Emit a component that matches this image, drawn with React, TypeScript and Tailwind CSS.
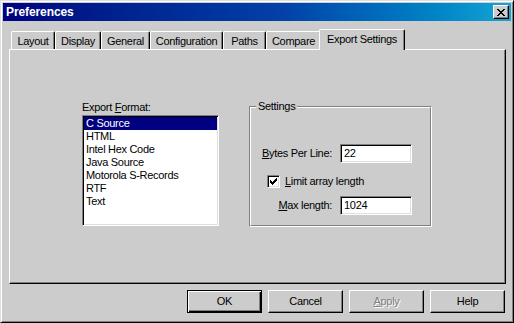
import React from 'react';

const raised =
  'border border-t-white border-l-white border-r-black border-b-black shadow-[inset_-1px_-1px_0_#808080]';
const sunken =
  'border border-t-[#808080] border-l-[#808080] border-r-white border-b-white shadow-[inset_1px_1px_0_#000,inset_-1px_-1px_0_#dfdfdf]';

const tabs = [
  { label: 'Layout', w: 'w-[44px]' },
  { label: 'Display', w: 'w-[46px]' },
  { label: 'General', w: 'w-[49px]' },
  { label: 'Configuration', w: 'w-[73px]' },
  { label: 'Paths', w: 'w-[43px]' },
  { label: 'Compare', w: 'w-[55px]' },
];

const formats = ['C Source', 'HTML', 'Intel Hex Code', 'Java Source', 'Motorola S-Records', 'RTF', 'Text'];

const CloseGlyph = () => (
  <svg width="8" height="7" viewBox="0 0 8 7" shapeRendering="crispEdges">
    <path
      d="M0 0h2v1H0zM6 0h2v1H6zM1 1h2v1H1zM5 1h2v1H5zM2 2h4v1H2zM3 3h2v1H3zM2 4h4v1H2zM1 5h2v1H1zM5 5h2v1H5zM0 6h2v1H0zM6 6h2v1H6z"
      fill="#000"
    />
  </svg>
);

const CheckGlyph = () => (
  <svg width="7" height="7" viewBox="0 0 7 7" shapeRendering="crispEdges">
    <path d="M6 0h1v1H6zM5 1h2v1H5zM0 2h1v1H0zM4 2h3v1H4zM0 3h2v1H0zM3 3h3v1H3zM0 4h5v1H0zM1 5h3v1H1zM2 6h1v1H2z" fill="#000" />
  </svg>
);

const Button = ({ children, isDefault }: { children: React.ReactNode; isDefault?: boolean }) => (
  <div
    className={`w-[75px] h-[23px] flex items-center justify-center ${
      isDefault
        ? 'border border-black shadow-[inset_1px_1px_0_#fff,inset_-1px_-1px_0_#000,inset_-2px_-2px_0_#808080]'
        : raised
    }`}
  >
    {children}
  </div>
);

export default function App() {
  return (
    <div className="w-[514px] h-[323px] bg-[#cccccc] font-['Liberation_Sans',Arial,sans-serif] text-[11px] leading-[13px] tracking-[-0.3px] text-black select-none">
      <div className="w-full h-full p-[2px] border border-t-[#dfdfdf] border-l-[#dfdfdf] border-r-black border-b-black shadow-[inset_1px_1px_0_#fff,inset_-1px_-1px_0_#808080] flex flex-col">
        {/* title bar */}
        <div className="h-[18px] flex items-center justify-between pl-[3px] pr-[2px] bg-linear-to-r from-[#000080] via-[#0440a8] via-55% to-[#16a4d4]">
          <span className="text-white font-bold text-[12px] tracking-[-0.1px]">Preferences</span>
          <div className={`w-[16px] h-[14px] bg-[#cccccc] flex items-center justify-center ${raised}`}>
            <CloseGlyph />
          </div>
        </div>

        {/* tab strip */}
        <div className="mt-[8px] h-[20px] pl-[8px] flex items-end">
          {tabs.map((t) => (
            <div
              key={t.label}
              className={`${t.w} h-[18px] flex justify-center pt-[3px] border-t border-l border-r border-t-white border-l-white border-r-black rounded-t-[2px] shadow-[inset_-1px_0_0_#808080]`}
            >
              {t.label}
            </div>
          ))}
          <div className="relative z-10 w-[86px] h-[21px] ml-[-2px] mb-[-1px] bg-[#cccccc] flex justify-center pt-[3px] border-t border-l border-r border-t-white border-l-white border-r-black rounded-t-[2px] shadow-[inset_-1px_0_0_#808080]">
            Export Settings
          </div>
        </div>

        {/* tab panel */}
        <div className={`ml-[6px] w-[497px] h-[235px] ${raised} flex items-start pt-[51px] pl-[72px]`}>
          <div className="flex flex-col">
            <div>
              Export <span className="underline underline-offset-[1px]">F</span>ormat:
            </div>
            <div className={`mt-[1px] w-[137px] h-[111px] bg-white ${sunken} flex flex-col p-[1px]`}>
              {formats.map((f, i) => (
                <div
                  key={f}
                  className={`h-[13px] pl-[2px] ${i === 0 ? 'bg-[#000080] text-white' : ''}`}
                >
                  {f}
                </div>
              ))}
            </div>
          </div>

          <div className="ml-[30px] mt-[5px] relative w-[183px] h-[121px] flex border border-t-[#808080] border-l-[#808080] border-r-white border-b-white">
            <span className="absolute top-[-7px] left-[6px] px-[2px] bg-[#cccccc]">Settings</span>
            <div className="flex-1 flex flex-col border border-t-white border-l-white border-r-[#808080] border-b-[#808080]">
              <div className="mt-[36px] flex items-center justify-end pr-[18px]">
                <span className="mr-[8px]">
                  <span className="underline underline-offset-[1px]">B</span>ytes Per Line:
                </span>
                <div className={`w-[72px] h-[19px] bg-white ${sunken} flex items-center pl-[3px]`}>22</div>
              </div>
              <div className="mt-[12px] flex items-center pl-[16px]">
                <div className={`w-[13px] h-[13px] bg-white ${sunken} flex items-center justify-center`}>
                  <CheckGlyph />
                </div>
                <span className="ml-[5px]">
                  <span className="underline underline-offset-[1px]">L</span>imit array length
                </span>
              </div>
              <div className="mt-[8px] flex items-center justify-end pr-[18px]">
                <span className="mr-[8px]">
                  <span className="underline underline-offset-[1px]">M</span>ax length:
                </span>
                <div className={`w-[72px] h-[19px] bg-white ${sunken} flex items-center pl-[3px]`}>1024</div>
              </div>
            </div>
          </div>
        </div>

        {/* buttons */}
        <div className="mt-[6px] flex justify-end gap-[6px] pr-[6px]">
          <Button isDefault>OK</Button>
          <Button>Cancel</Button>
          <Button>
            <span className="text-[#808080] [text-shadow:1px_1px_0_#fff]">
              <span className="underline underline-offset-[1px]">A</span>pply
            </span>
          </Button>
          <Button>Help</Button>
        </div>
      </div>
    </div>
  );
}
